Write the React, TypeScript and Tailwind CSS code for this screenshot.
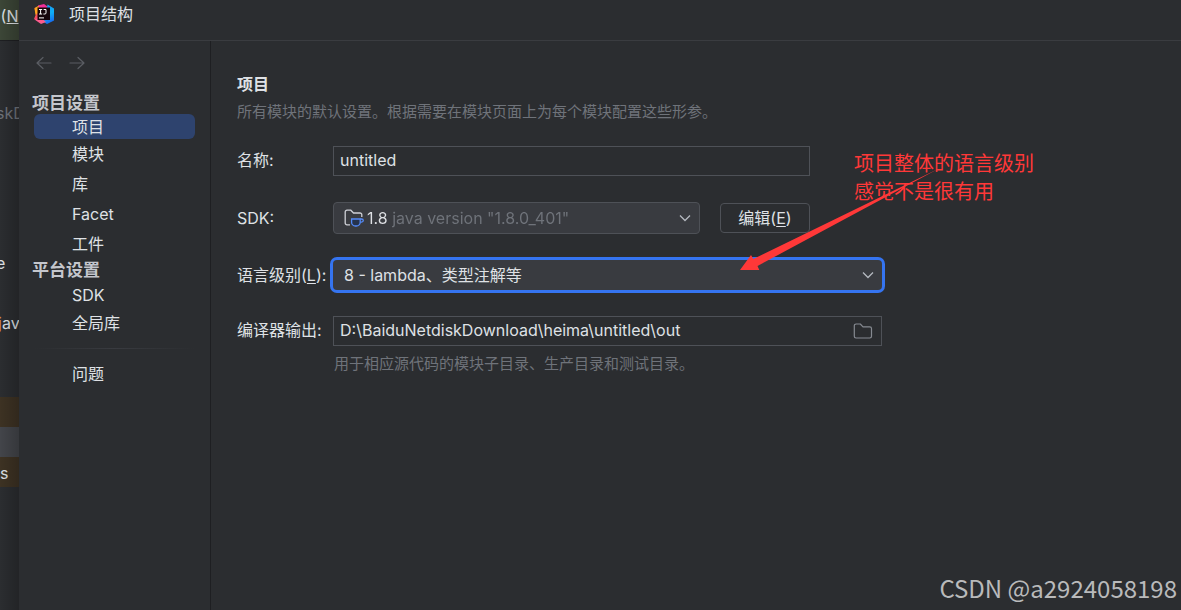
import type { ReactNode } from "react";

const FONT = "font-['Inter','Noto_Sans_CJK_SC',sans-serif]";

function IdeLogo() {
  return (
    <svg viewBox="0 0 20 20" className="h-5 w-5 shrink-0" aria-hidden="true">
      <defs>
        <linearGradient id="warm" x1="0" y1="0" x2="0.4" y2="1">
          <stop offset="0" stopColor="#ff9a1f" />
          <stop offset="0.5" stopColor="#fc5a4a" />
          <stop offset="1" stopColor="#e8308c" />
        </linearGradient>
        <linearGradient id="cool" x1="0" y1="0" x2="0.3" y2="1">
          <stop offset="0" stopColor="#1f8cf5" />
          <stop offset="0.6" stopColor="#0fb0f5" />
          <stop offset="1" stopColor="#1672f0" />
        </linearGradient>
      </defs>
      <path d="M0.500 4 5 1.500 9 3v13l-2 3L0 15l2-5z" fill="url(#warm)" />
      <path d="M4 1.500 10 0l4 3-4 6H5z" fill="#f0309a" />
      <path d="M13.500 0.500 20 4.500v12L13 20l-4-2.500L7 13l6-9z" fill="url(#cool)" />
      <path d="M0.500 15.500 6 13l6 5-5 2z" fill="#fb5b8c" />
      <path d="M0.500 4.500 5 2v6l-3.500 3z" fill="#ffa51f" />
      <rect x="3.500" y="3.500" width="12.500" height="12.500" fill="#16060c" />
      <path
        d="M5 5.500h3.200M6.600 5.500v4.500M5 10h3.200M9.600 5.500h2.400v3.400q0 1.100-1.100 1.100H9.400"
        fill="none"
        stroke="#fff"
        strokeWidth="1"
      />
      <path d="M5 13.900h5" stroke="#fff" strokeWidth="1" />
    </svg>
  );
}

function Chevron() {
  return (
    <svg
      viewBox="0 0 12 8"
      className="pointer-events-none col-start-1 row-start-1 mr-2 h-2 w-3 self-center justify-self-end"
      fill="none"
      stroke="#b4b8bf"
      strokeWidth="1.3"
      aria-hidden="true"
    >
      <path d="m1 1.500 5 5 5-5" />
    </svg>
  );
}

function SdkIcon() {
  return (
    <svg
      viewBox="0 0 20 18"
      className="pointer-events-none col-start-1 row-start-1 ml-2.5 h-[18px] w-5 self-center"
      fill="none"
      aria-hidden="true"
    >
      <path
        d="M6 15.800H3A1.800 1.800 0 0 1 1.200 14V3A1.800 1.800 0 0 1 3 1.200h3.800L9.500 4H16a1.800 1.800 0 0 1 1.800 1.800V8"
        stroke="#ced0d6"
        strokeWidth="1.300"
      />
      <path
        d="M7.600 10h8.600v3.200a3.800 3.800 0 0 1-3.800 3.800h-1a3.800 3.800 0 0 1-3.800-3.800z"
        fill="#25324d"
        stroke="#548af7"
        strokeWidth="1.300"
      />
      <path d="M16.200 10h1.200q1.900 0 1.900 1.500t-1.900 1.600h-1.200" stroke="#548af7" strokeWidth="1.300" />
    </svg>
  );
}

function NavArrow({ back, label }: { back?: boolean; label: string }) {
  return (
    <button type="button" aria-label={label} className="flex h-4 w-4 items-center justify-center">
      <svg
        viewBox="0 0 16 14"
        className="h-3.5 w-4"
        fill="none"
        stroke="#5a5d63"
        strokeWidth="1.2"
        strokeLinecap="round"
        strokeLinejoin="round"
      >
        {back ? <path d="M15 7H1m6-5.500L1 7l6 5.500" /> : <path d="M1 7h14M9 1.500 15 7l-6 5.500" />}
      </svg>
    </button>
  );
}

function NavItem({ children, tall }: { children: ReactNode; tall?: boolean }) {
  return (
    <li>
      <a
        href="#"
        className={tall ? "flex h-[30px] items-center pl-[38px]" : "flex h-7 items-center pl-[38px]"}
      >
        {children}
      </a>
    </li>
  );
}

function GroupTitle({ children }: { children: ReactNode }) {
  return (
    <h2 className="-ml-0.5 flex h-[22px] items-center text-[17px] leading-[22px] font-bold text-[#c4c6cc]">
      {children}
    </h2>
  );
}

function EditorStrip() {
  return (
    <div
      aria-hidden="true"
      className="relative w-[19px] shrink-0 overflow-hidden bg-[#2b2d30] whitespace-nowrap"
    >
      <div className="h-10 bg-[#3c4637] pt-1">
        <span className="-ml-1">
          .(<u>N</u>
        </span>
      </div>
      <div className="flex h-[357px] flex-col border-t border-[#1e1f22]">
        <div className="-ml-1 h-[134px] pt-[60px] text-[#6f737a]">skD</div>
        <div className="-ml-1 h-[100px] pt-[76px] leading-6">e</div>
        <div className="-ml-0.5 pt-9 leading-6">
          <span className="text-[#cf8e4d]">j</span>av
        </div>
      </div>
      <div className="h-[30px] bg-[#3d3223]" />
      <div className="h-[30px] bg-[#43454a]" />
      <div className="h-[30px] bg-[#3d3223] pt-1">s</div>
      <div className="absolute inset-0 bg-linear-to-r from-transparent to-black/20" />
    </div>
  );
}

function Sidebar() {
  return (
    <nav className="w-48 shrink-0 border-r border-[#1e1f22] pr-[15px] pl-[15px]">
      <div className="flex h-[51px] items-center gap-[17px] pb-2 pl-0.5">
        <NavArrow back label="后退" />
        <NavArrow label="前进" />
      </div>
      <GroupTitle>项目设置</GroupTitle>
      <ul>
        <li>
          <a
            href="#"
            aria-current="page"
            className="flex h-[25px] items-center rounded-md bg-[#2e436e] pl-[38px]"
          >
            项目
          </a>
        </li>
        <NavItem tall>模块</NavItem>
        <NavItem tall>库</NavItem>
        <NavItem tall>Facet</NavItem>
        <NavItem tall>工件</NavItem>
      </ul>
      <GroupTitle>平台设置</GroupTitle>
      <ul>
        <NavItem>SDK</NavItem>
        <NavItem>全局库</NavItem>
      </ul>
      <hr className="my-[11px] h-px border-0 bg-linear-to-r from-transparent via-[#393b40] to-transparent" />
      <ul>
        <NavItem>问题</NavItem>
      </ul>
    </nav>
  );
}

function ProjectForm() {
  return (
    <main className="min-w-0 flex-1 px-[26px] pt-[31px]">
      <h1 className="h-6 text-base leading-6 font-bold text-[#dfe1e5]">项目</h1>
      <p className="pt-1 text-[15px] leading-6 text-[#6f737a]">
        所有模块的默认设置。根据需要在模块页面上为每个模块配置这些形参。
      </p>
      <form className="grid grid-cols-[96px_minmax(0,549px)] items-center gap-y-[26px] pt-[22px]">
        <label htmlFor="name" className="pb-0.5">
          名称:
        </label>
        <input
          id="name"
          defaultValue="untitled"
          className="h-[30px] w-full max-w-[477px] border border-[#4e5157] bg-transparent px-1.5 pb-0.5 outline-none"
        />

        <label htmlFor="sdk">SDK:</label>
        <div className="flex items-center gap-5">
          <div className="grid h-8 w-[367px] min-w-0 rounded border border-[#4e5157] bg-[#393b40]">
            <select
              id="sdk"
              className="col-start-1 row-start-1 h-full w-full appearance-none bg-linear-to-r from-[#dfe1e5] from-[57px] to-[#6f737a] to-[57px] bg-clip-text pr-8 pl-[33px] text-transparent outline-none"
            >
              <option className="bg-[#393b40] text-[#dfe1e5]">1.8 java version "1.8.0_401"</option>
            </select>
            <SdkIcon />
            <Chevron />
          </div>
          <button
            type="button"
            className="h-[30px] w-[90px] shrink-0 rounded border border-[#4e5157] whitespace-nowrap"
          >
            编辑(<u className="underline-offset-2">E</u>)
          </button>
        </div>

        <label htmlFor="level" className="whitespace-nowrap">
          语言级别(<u className="underline-offset-2">L</u>):
        </label>
        <div className="grid h-[30px] rounded-sm bg-[#393b40] ring-[3px] ring-[#3574f0]">
          <select
            id="level"
            className="col-start-1 row-start-1 h-full w-full appearance-none bg-transparent pr-8 pl-[11px] outline-none"
          >
            <option className="bg-[#393b40]">8 - lambda、类型注解等</option>
          </select>
          <Chevron />
        </div>

        <label htmlFor="output" className="pb-0.5">
          编译器输出:
        </label>
        <div className="flex h-[30px] items-center border border-[#4e5157] pr-2">
          <input
            id="output"
            defaultValue="D:\BaiduNetdiskDownload\heima\untitled\out"
            className="min-w-0 flex-1 bg-transparent px-1.5 pb-0.5 outline-none"
          />
          <button type="button" aria-label="浏览">
            <svg
              viewBox="0 0 20 16"
              className="h-4 w-5"
              fill="none"
              stroke="#868a91"
              strokeWidth="1.2"
              strokeLinejoin="round"
            >
              <path d="M3 1h4.300L10 3.800h6.800A1.700 1.700 0 0 1 18.500 5.500v7.800A1.700 1.700 0 0 1 16.800 15H3a1.700 1.700 0 0 1-1.700-1.700V2.700A1.700 1.700 0 0 1 3 1z" />
            </svg>
          </button>
        </div>
      </form>
      <p className="pt-1.5 pl-[97px] text-[15px] leading-6 text-[#6f737a]">
        用于相应源代码的模块子目录、生产目录和测试目录。
      </p>
    </main>
  );
}

export default function App() {
  return (
    <div
      className={`${FONT} relative flex min-h-screen overflow-hidden bg-[#2b2d30] text-base text-[#dfe1e5]`}
    >
      <EditorStrip />
      <div className="flex min-w-0 flex-1 flex-col">
        <header className="flex h-[41px] items-center gap-[15px] border-b border-[#3a3c40] pb-3 pl-[15px]">
          <IdeLogo />
          <span>项目结构</span>
        </header>
        <div className="flex flex-1">
          <Sidebar />
          <ProjectForm />
        </div>
      </div>
      <p className="absolute top-[150px] left-[854px] text-xl leading-7 text-[#ff3838]">
        项目整体的语言级别
        <br />
        感觉不是很有用
      </p>
      <svg
        viewBox="0 0 200 104"
        className="pointer-events-none absolute top-[168px] left-[739px] h-[104px] w-[200px]"
        aria-hidden="true"
      >
        <path d="M1 102 12 87l2.300 4L199 1 18.500 98l1.800 4z" fill="#ff3838" />
      </svg>
      <p className="absolute right-1 bottom-1.5 font-['Noto_Sans_CJK_SC',sans-serif] text-2xl leading-8 text-[#b9babb]">
        CSDN @a2924058198
      </p>
    </div>
  );
}
